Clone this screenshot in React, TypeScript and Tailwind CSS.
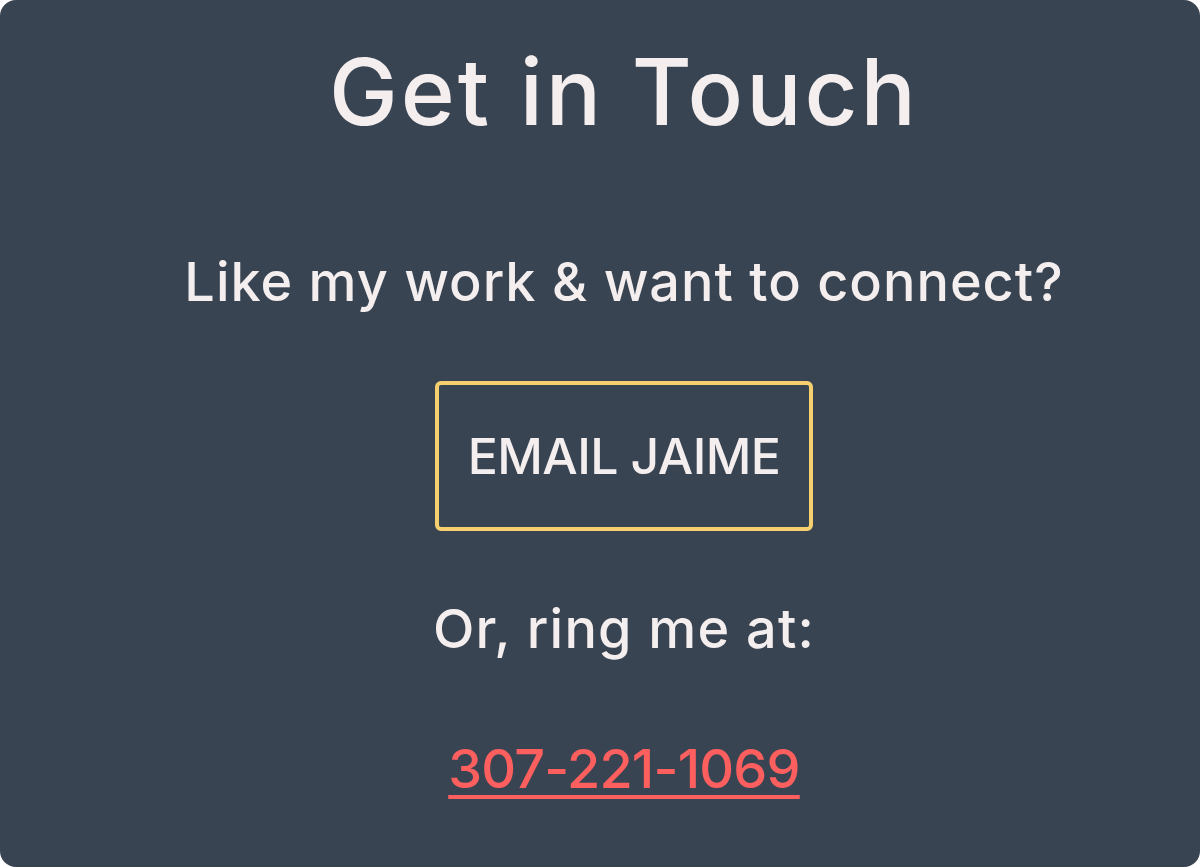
export default function App() {
  return (
    <div className="h-[867px] w-[1200px] bg-white">
      <section
        className="flex h-full w-full flex-col items-center rounded-[16px] bg-[#394452] pl-[48px] text-[#f4eeee]"
        style={{ fontFamily: "Inter, 'Noto Sans', sans-serif" }}
      >
        <h1 className="mt-[36px] text-[92px] leading-[112px] font-medium tracking-[3px]">
          Get in Touch
        </h1>
        <p className="mt-[102px] text-[54px] leading-[64px] font-medium tracking-[1px]">
          Like my work &amp; want to connect?
        </p>
        <a
          href="#"
          className="mt-[67px] flex h-[150px] w-[378px] items-center justify-center rounded-[6px] border-[4px] border-[#f6cf6e] text-[50px] font-medium tracking-[-0.6px]"
        >
          EMAIL JAIME
        </a>
        <p className="mt-[66px] text-[54px] leading-[64px] font-medium tracking-[1.2px]">
          Or, ring me at:
        </p>
        <a
          href="#"
          className="mt-[76px] text-[54px] leading-[64px] font-medium tracking-[-0.8px] text-[#fd5f5f] underline decoration-[4px] underline-offset-[7px]"
        >
          307-221-1069
        </a>
      </section>
    </div>
  );
}
